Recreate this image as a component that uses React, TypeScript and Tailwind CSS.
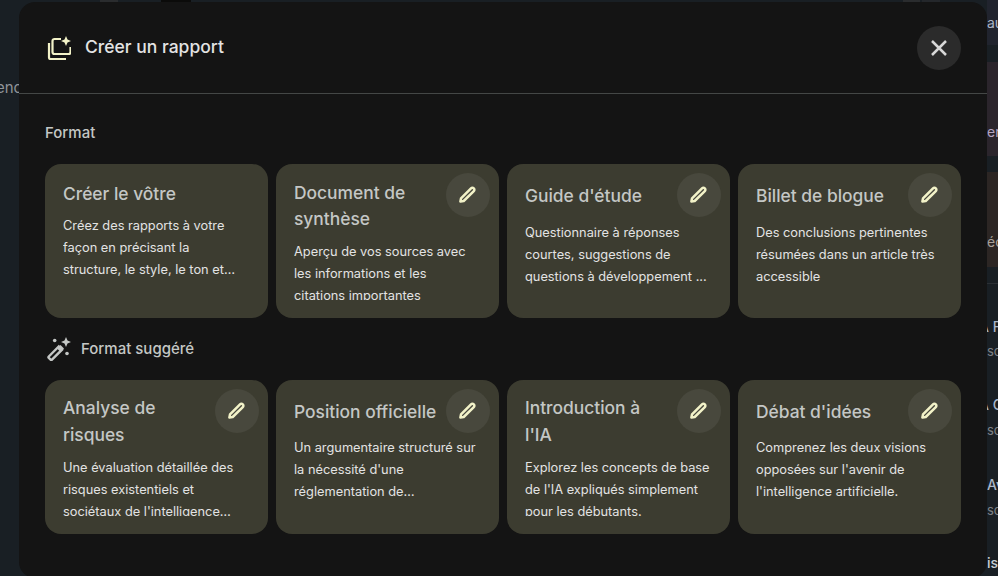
import React from "react";

const font = { fontFamily: '"Inter", "Liberation Sans", sans-serif' };

function ReportIcon() {
  return (
    <svg width="24" height="24" viewBox="0 0 24 24" fill="none" stroke="#f2f2c8" strokeWidth="2.2" className="shrink-0">
      <path d="M14 3H7.5a2 2 0 0 0-2 2v11a2 2 0 0 0 2 2h14a2 2 0 0 0 2-2v-5" />
      <path d="M2 7v14.5A1.5 1.5 0 0 0 3.5 23H19" />
      <path d="M19 0l1.5 3.5L24 5l-3.5 1.5L19 10l-1.5-3.5L14 5l3.5-1.5z" fill="#f2f2c8" stroke="none" />
    </svg>
  );
}

function Pencil() {
  return (
    <svg width="20" height="20" viewBox="0 0 20 20" fill="none" stroke="#f2f2c8" strokeWidth="2.5" strokeLinejoin="round">
      <path d="M2.4 16.6l.6-3.2L13 3.4a1.9 1.9 0 0 1 2.8 2.8L5.7 16z" />
    </svg>
  );
}

function Wand() {
  return (
    <svg width="24" height="24" viewBox="0 0 24 24" fill="none" className="shrink-0">
      <path d="M1.8 19.5l10-10 3.2 3.2-10 10a1 1 0 0 1-1.4 0l-1.8-1.8a1 1 0 0 1 0-1.4z" stroke="#c4c7c5" strokeWidth="2.4" />
      <path d="M10 11.5l3.5-3.5 3.5 3.5-3.5 3.5z" fill="#c4c7c5" />
      <path d="M19 0l1.5 3.5L24 5l-3.5 1.5L19 10l-1.5-3.5L14 5l3.5-1.5z" fill="#c4c7c5" />
      <circle cx="7.7" cy="3.5" r="1.8" fill="#c4c7c5" />
      <circle cx="20" cy="16.5" r="1.8" fill="#c4c7c5" />
    </svg>
  );
}

type Card = { title: string[]; lines: string[]; edit: boolean };

const formats: Card[] = [
  { title: ["Créer le vôtre"], edit: false, lines: ["Créez des rapports à votre", "façon en précisant la", "structure, le style, le ton et…"] },
  { title: ["Document de", "synthèse"], edit: true, lines: ["Aperçu de vos sources avec", "les informations et les", "citations importantes"] },
  { title: ["Guide d'étude"], edit: true, lines: ["Questionnaire à réponses", "courtes, suggestions de", "questions à développement ..."] },
  { title: ["Billet de blogue"], edit: true, lines: ["Des conclusions pertinentes", "résumées dans un article très", "accessible"] },
];

const suggested: Card[] = [
  { title: ["Analyse de", "risques"], edit: true, lines: ["Une évaluation détaillée des", "risques existentiels et", "sociétaux de l'intelligence…"] },
  { title: ["Position officielle"], edit: true, lines: ["Un argumentaire structuré sur", "la nécessité d'une", "réglementation de…"] },
  { title: ["Introduction à", "l'IA"], edit: true, lines: ["Explorez les concepts de base", "de l'IA expliqués simplement", "pour les débutants."] },
  { title: ["Débat d'idées"], edit: true, lines: ["Comprenez les deux visions", "opposées sur l'avenir de", "l'intelligence artificielle."] },
];

function FormatCard({ card, first }: { card: Card; first: boolean }) {
  const twoLines = card.title.length > 1;
  const titleClass = twoLines
    ? first
      ? "pt-[7px] text-[17.4px] font-medium leading-[26px] text-[#c4c7c5]"
      : "pt-[5px] text-[17.4px] font-medium leading-[27px] text-[#c4c7c5]"
    : card.edit
      ? "flex h-[45px] items-center text-[17.4px] font-medium leading-[27px] text-[#c4c7c5]"
      : "pt-[7px] text-[17.4px] font-medium leading-[27px] text-[#c4c7c5]";
  const descMargin = twoLines
    ? "mt-[9px]"
    : card.edit
      ? first
        ? "mt-[4px]"
        : "mt-[3px]"
      : "mt-[8px]";
  return (
    <div className="flex h-[154px] flex-col overflow-hidden rounded-[16px] bg-[#3c3c30] pb-[18px] pl-[18px] pr-[9px] pt-[9px]">
      <div className="flex shrink-0 items-start justify-between">
        <div className={titleClass}>
          <div>
            {card.title.map((t) => (
              <div key={t} className="whitespace-nowrap">{t}</div>
            ))}
          </div>
        </div>
        {card.edit && (
          <button className="flex h-[44px] w-[44px] shrink-0 items-center justify-center rounded-full bg-[#48483d]">
            <Pencil />
          </button>
        )}
      </div>
      <div className={descMargin + " min-h-0 overflow-hidden text-[12.8px] leading-[22px] text-[#e3e3e3]"}>
        {card.lines.map((l) => (
          <div key={l} className="whitespace-nowrap">{l}</div>
        ))}
      </div>
    </div>
  );
}

const stripText = "whitespace-nowrap text-[14px] leading-5";

export default function App() {
  return (
    <div className="relative h-[576px] w-[998px] overflow-hidden bg-[#191f24]" style={font}>
      {/* page behind the dialog */}
      <div className="absolute inset-x-0 top-0 flex h-[2px]">
        <div className="ml-[100px] w-[18px] bg-[#2a2c2e]" />
        <div className="ml-[43px] w-[30px] bg-[#0b0b0a]" />
        <div className="ml-[712px] w-[17px] bg-[#2a2c2e]" />
        <div className="ml-[2px] w-[18px] bg-[#24272b]" />
      </div>
      <div className="flex h-full justify-between">
        <div className="w-[19px] overflow-hidden pt-[78px]">
          <div className="-ml-[4px] whitespace-nowrap text-[15px] leading-5 text-[#8f9499]">enc</div>
        </div>
        <div className="w-[11px] overflow-hidden">
          <div className="flex h-[45px] items-center bg-[#21242e] text-[#a9b4c6]">
            <span className={stripText}>au</span>
          </div>
          <div className="h-[17px] bg-[#191f24]" />
          <div className="flex h-[94px] items-end bg-[#2b252c] pb-[14px] text-[#b3a3c0]">
            <span className={stripText}>er</span>
          </div>
          <div className="h-[16px] bg-[#191f24]" />
          <div className="flex h-[95px] items-end bg-[#2c2624] pb-[15px] text-[#a7a09a]">
            <span className={stripText}>éc</span>
          </div>
          <div className="h-[17px] border-b border-[#2b3035]" />
          <div className="-ml-[8px] mt-[33px] whitespace-nowrap text-[14px] font-medium leading-5 text-[#a9b6c9]">A F</div>
          <div className="mt-[4px] whitespace-nowrap text-[13px] leading-5 text-[#7d8287]">so</div>
          <div className="-ml-[8px] mt-[34px] whitespace-nowrap text-[14px] font-medium leading-5 text-[#a9b6c9]">A C</div>
          <div className="mt-[5px] whitespace-nowrap text-[13px] leading-5 text-[#7d8287]">so</div>
          <div className="mt-[35px] whitespace-nowrap text-[14px] font-medium leading-5 text-[#a9b6c9]">Av</div>
          <div className="mt-[5px] whitespace-nowrap text-[13px] leading-5 text-[#7d8287]">so</div>
          <div className="mt-[33px] whitespace-nowrap text-[14px] font-medium leading-5 text-[#c9ced3]">is</div>
        </div>
      </div>

      {/* dialog */}
      <div className="absolute left-[19px] top-[2px] h-[576px] w-[968px] rounded-[16px] bg-[#141414]">
        <div className="box-border flex h-[92px] items-center justify-between border-b border-[#444746] pl-[28px] pr-[26px]">
          <div className="flex items-center gap-[14px]">
            <ReportIcon />
            <span className="text-[17.5px] font-medium text-[#e3e3e3]">Créer un rapport</span>
          </div>
          <button className="flex h-[44px] w-[44px] items-center justify-center rounded-full bg-[#2b2b2b]">
            <svg width="16" height="16" viewBox="0 0 16 16" stroke="#d8d8d8" strokeWidth="2.5" fill="none">
              <path d="M1 1l14 14M15 1L1 15" />
            </svg>
          </button>
        </div>
        <div className="px-[26px]">
          <div className="mb-[21px] mt-[29px] text-[15px] font-medium leading-5 text-[#c4c7c5]">Format</div>
          <div className="grid grid-cols-4 gap-2">
            {formats.map((c) => (
              <FormatCard key={c.title[0]} card={c} first={true} />
            ))}
          </div>
          <div className="mb-[19px] ml-[2px] mt-[19px] flex h-[24px] items-center gap-[10px] text-[15px] font-medium text-[#c4c7c5]">
            <Wand />
            <span>Format suggéré</span>
          </div>
          <div className="grid grid-cols-4 gap-2">
            {suggested.map((c) => (
              <FormatCard key={c.title[0]} card={c} first={false} />
            ))}
          </div>
        </div>
      </div>
    </div>
  );
}
